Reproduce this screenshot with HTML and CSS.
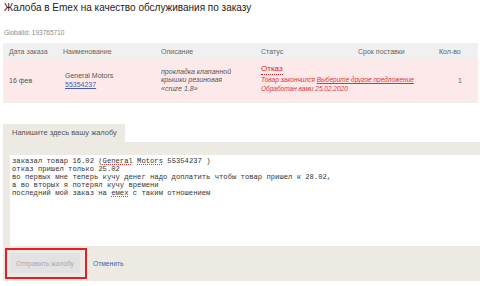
FILE: index.html
```html
<!DOCTYPE html>
<html lang="ru">
<head>
<meta charset="utf-8">
<link rel="stylesheet" href="styles.css">
</head>
<body>
<div class="page">
  <h1 class="title">Жалоба в Emex на качество обслуживания по заказу</h1>
  <div class="gid">GlobalId: 193765710</div>
  <div class="table">
    <div class="row head">
      <div class="c c1">Дата заказа</div>
      <div class="c c2">Наименование</div>
      <div class="c c3">Описание</div>
      <div class="c c4">Статус</div>
      <div class="c c5">Срок поставки</div>
      <div class="c c6">Кол-во</div>
    </div>
    <div class="row body">
      <div class="c c1">16 фев</div>
      <div class="c c2 name">General Motors<br><a class="num" href="#">55354237</a></div>
      <div class="c c3 desc">прокладка клапанной<br>крышки резиновая<br>«cruze 1.8»</div>
      <div class="c c4 status">
        <span class="refuse">Отказ</span>
        <span class="note">Товар закончился <a href="#" class="alt">Выберите другое предложение</a></span>
        <span class="note">Обработан вами 25.02.2020</span>
      </div>
      <div class="c c5"></div>
      <div class="c c6 qty">1</div>
    </div>
  </div>
  <div class="tabs"><div class="tab">Напишите здесь вашу жалобу</div></div>
  <div class="panel">
    <div class="textarea"><div class="ln">заказал товар 16.02 (<span class="sp">General</span> <span class="sp">Motors</span> 55354237 )</div><div class="ln">отказ пришел только 25.02</div><div class="ln">во первых мне теперь кучу денег надо доплатить чтобы товар пришел к 28.02,</div><div class="ln">а во вторых я потерял кучу времени</div><div class="ln">последний мой заказ на <span class="sp">емех</span> с таким отношением</div></div>
    <div class="footer">
      <div class="hl"><button class="send" type="button">Отправить жалобу</button></div>
      <a class="cancel" href="#">Отменить</a>
    </div>
  </div>
</div>
</body>
</html>
```

FILE: styles.css
```css
html, body {
  margin: 0;
  padding: 0;
  background: #fff;
}
body {
  font-family: "Liberation Sans", Arial, sans-serif;
  color: #333;
}
.page {
  padding: 0 0 0 3px;
}
.title {
  margin: 0;
  padding: 1px 0 0 1px;
  font-size: 10px;
  font-weight: normal;
  line-height: 14px;
  color: #222;
}
.gid {
  margin-top: 13px;
  padding-left: 1px;
  font-size: 6.5px;
  line-height: 10px;
  color: #888;
}
.table {
  margin-top: 5px;
  width: 475px;
  border-bottom: 2px solid #eeeeee;
}
.row {
  display: grid;
  grid-template-columns: 54px 98px 100px 97px 81px 45px;
  align-items: center;
}
.head {
  background: #f0f0f0;
  height: 16px;
  font-size: 7px;
  color: #666;
}
.body {
  background: #fde9e9;
  height: 42px;
  font-size: 7px;
  color: #555;
}
.c {
  padding-left: 6px;
  line-height: 9px;
}
.name {
  padding-left: 8px;
}
.num {
  color: #4a5ea8;
  text-decoration: underline;
}
.desc {
  font-style: italic;
  font-size: 7px;
  line-height: 8.5px;
  color: #555;
  padding-top: 1px;
}
.status {
  display: flex;
  flex-direction: column;
  white-space: nowrap;
  margin-top: -3px;
}
.refuse {
  color: #d91c1c;
  font-size: 8px;
  line-height: 10px;
  align-self: flex-start;
  border-bottom: 1px dotted #d91c1c;
  margin-bottom: 1px;
}
.note {
  color: #d33;
  font-style: italic;
  font-size: 6.5px;
  line-height: 8.5px;
}
.alt {
  color: #d33;
  text-decoration: underline;
}
.qty {
  padding-left: 25px;
  color: #666;
}
.tabs {
  margin-top: 21px;
  display: flex;
}
.tab {
  background: #ede9e3;
  width: 122px;
  height: 18px;
  line-height: 18px;
  padding-left: 9px;
  box-sizing: border-box;
  font-size: 7.5px;
  color: #555;
}
.panel {
  background: #ede9e3;
  padding: 13px 0 0 7px;
}
.textarea {
  background: #fff;
  height: 91px;
  box-sizing: border-box;
  padding: 2px 0 0 2px;
  font-family: "Liberation Mono", "Courier New", monospace;
  font-size: 7.2px;
  color: #333;
}
.ln {
  height: 8px;
  line-height: 8px;
  white-space: pre;
  overflow: visible;
}
.sp {
  display: inline-block;
  height: 8px;
  line-height: 8px;
  vertical-align: top;
  text-decoration: underline dotted #e33;
  text-decoration-thickness: 1px;
  text-underline-offset: 0.5px;
}
.footer {
  height: 35px;
  display: flex;
  align-items: center;
  margin-left: -5px;
}
.hl {
  border: 2px solid #e41e26;
  padding: 3px 5px 4px 3px;
  display: flex;
}
.send {
  background: #e2e2e2;
  border: none;
  width: 70px;
  height: 20px;
  padding: 0;
  font-family: "Liberation Sans", Arial, sans-serif;
  font-size: 6.7px;
  color: #aaa;
}
.cancel {
  margin-left: 6px;
  font-size: 6.7px;
  color: #3d66b0;
  text-decoration: none;
}
```
